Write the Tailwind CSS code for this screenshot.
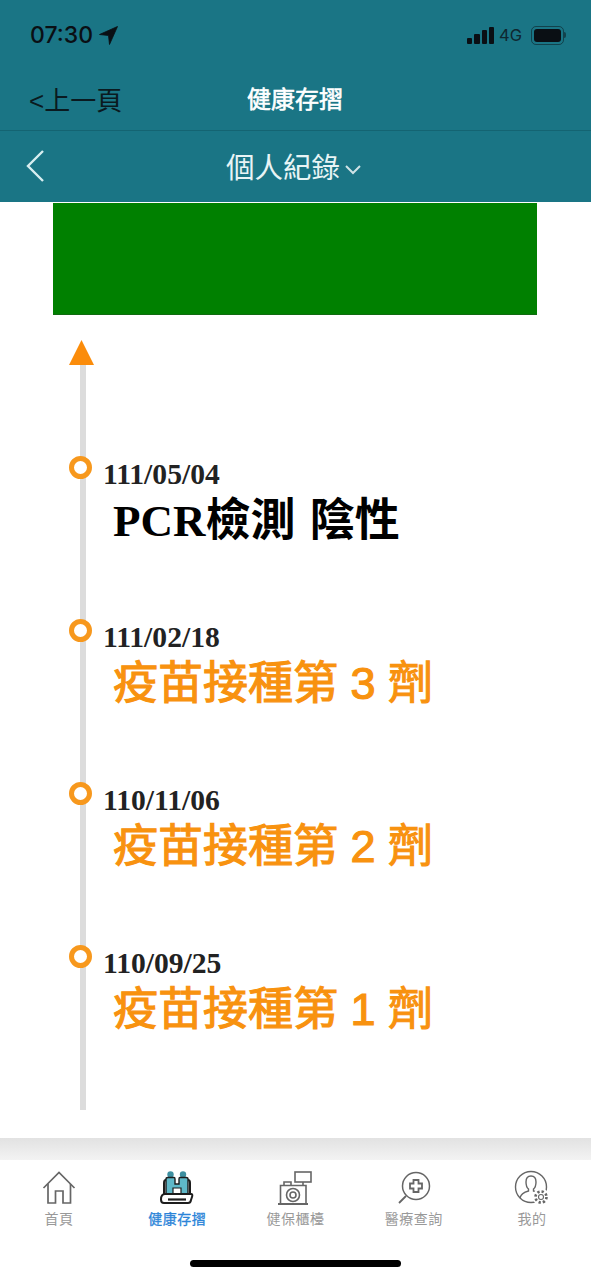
<!DOCTYPE html>
<html lang="zh-Hant">
<head>
    <meta charset="UTF-8">
    <meta name="viewport" content="width=device-width, initial-scale=1.0">
    <title>健康存摺</title>
    <script src="https://cdn.jsdelivr.net/npm/@tailwindcss/browser@4"></script>
</head>
<body class="bg-white font-['Liberation_Sans','Noto_Sans_CJK_TC',sans-serif]">
<div class="w-[591px] h-[1279px] flex flex-col overflow-hidden">
    <!-- 頂部 -->
    <header class="bg-[#1a7585] h-[202px] flex flex-col shrink-0">
        <div class="h-[60px] pt-[20px] pl-[30px] pr-[25px] flex items-start justify-between text-[#0a0f14]">
            <div class="flex items-center gap-[6px] text-[23px] leading-[30px] font-['Inter',sans-serif] font-medium">
                07:30
                <svg width="19" height="19" viewBox="0 0 19 19"><path d="M18.5 0.500 L0.500 8.500 L9.500 9.500 L10.500 18.500 Z" fill="#0a0f14" stroke="#0a0f14" stroke-width="0.800"/></svg>
            </div>
            <div class="flex items-center gap-[6px] h-[30px]">
                <div class="flex items-end gap-[2px] h-[17px] -ml-[1px]">
                    <span class="w-[5.25px] h-[6px] bg-[#0a0f14] rounded-[1px]"></span>
                    <span class="w-[5.25px] h-[10px] bg-[#0a0f14] rounded-[1px]"></span>
                    <span class="w-[5.25px] h-[14px] bg-[#0a0f14] rounded-[1px]"></span>
                    <span class="w-[5.25px] h-[17px] bg-[#0a0f14] rounded-[1px]"></span>
                </div>
                <span class="text-[16.5px] leading-none font-['Inter',sans-serif] text-[#0f2730] mr-[3px] -ml-[1px]">4G</span>
                <div class="w-[33px] h-[19px] border border-[#0a0f14]/50 rounded-[5px] p-[2px]">
                    <div class="w-full h-full bg-[#0a0f14] rounded-[3px]"></div>
                </div>
                <span class="w-[2px] h-[6px] bg-[#0a0f14]/50 -ml-[6px] rounded-r-[2px]"></span>
            </div>
        </div>
        <div class="h-[71px] relative flex items-center justify-center border-b border-[#146472]">
            <span class="absolute left-[29px] top-[26px] text-[26px] leading-[30px] text-[#0a1a20]">&lt;上一頁</span>
            <span class="text-[24px] text-white leading-[30px] mt-[10px] -ml-[1px] [-webkit-text-stroke:0.6px_#ffffff]">健康存摺</span>
        </div>
        <div class="h-[70px] relative flex items-center justify-center">
            <svg class="absolute left-[23px] top-[18px]" width="24" height="34" viewBox="0 0 24 34" fill="none"><path d="M20 2 L5 17 L20 32" stroke="#d8eef0" stroke-width="2.400"/></svg>
            <span class="text-[28.5px] text-[#e8f4f5] leading-[36px] mt-[4px] -ml-[3px]">個人紀錄</span>
            <svg class="ml-[4px] mt-[8px]" width="18" height="12" viewBox="0 0 18 12" fill="none"><path d="M2 2 L9 9 L16 2" stroke="#cfe3e6" stroke-width="2"/></svg>
        </div>
    </header>

    <!-- 內容 -->
    <main class="h-[936px] shrink-0 pl-[53px] pr-[54px]">
        <div class="h-[112px] mt-[1px] bg-[#008000] border-b border-[#116a11]"></div>
        <div class="relative h-[796px] mt-[25px]">
            <div class="absolute left-[27px] top-[24px] w-[6px] h-[746px] bg-[#dcdcdc]"></div>
            <svg class="absolute left-[16px] top-0" width="25" height="25" viewBox="0 0 25 25"><path d="M12.500 0 L25 25 L0 25 Z" fill="#fb8c0a"/></svg>
            <div class="pt-[111px] pl-[50px] flex flex-col">
                <div class="relative h-[163px]">
                    <span class="absolute left-[-34px] top-[5px] w-[23px] h-[23px] rounded-full bg-white border-[5px] border-[#f7981d]"></span>
                    <p class="mt-[7px] font-['Liberation_Serif','Noto_Sans_CJK_TC',serif] font-bold text-[29.6px] leading-[32px] text-[#222]">111/05/04</p>
                    <p class="ml-[10px] mt-[1px] [word-spacing:3px] font-['Liberation_Serif','Noto_Sans_CJK_TC',serif] font-bold text-[45px] leading-[60px] text-black">PCR檢測 陰性</p>
                </div>
                <div class="relative h-[163px]">
                    <span class="absolute left-[-34px] top-[5px] w-[23px] h-[23px] rounded-full bg-white border-[5px] border-[#f7981d]"></span>
                    <p class="mt-[7px] font-['Liberation_Serif','Noto_Sans_CJK_TC',serif] font-bold text-[29.6px] leading-[32px] text-[#222]">111/02/18</p>
                    <p class="ml-[10px] mt-[1px] text-[45px] leading-[60px] text-[#f8920f] [-webkit-text-stroke:1.2px_#f8920f]">疫苗接種第 3 劑</p>
                </div>
                <div class="relative h-[163px]">
                    <span class="absolute left-[-34px] top-[5px] w-[23px] h-[23px] rounded-full bg-white border-[5px] border-[#f7981d]"></span>
                    <p class="mt-[7px] font-['Liberation_Serif','Noto_Sans_CJK_TC',serif] font-bold text-[29.6px] leading-[32px] text-[#222]">110/11/06</p>
                    <p class="ml-[10px] mt-[1px] text-[45px] leading-[60px] text-[#f8920f] [-webkit-text-stroke:1.2px_#f8920f]">疫苗接種第 2 劑</p>
                </div>
                <div class="relative h-[163px]">
                    <span class="absolute left-[-34px] top-[5px] w-[23px] h-[23px] rounded-full bg-white border-[5px] border-[#f7981d]"></span>
                    <p class="mt-[7px] font-['Liberation_Serif','Noto_Sans_CJK_TC',serif] font-bold text-[29.6px] leading-[32px] text-[#222]">110/09/25</p>
                    <p class="ml-[10px] mt-[1px] text-[45px] leading-[60px] text-[#f8920f] [-webkit-text-stroke:1.2px_#f8920f]">疫苗接種第 1 劑</p>
                </div>
            </div>
        </div>
    </main>

    <!-- 陰影 -->
    <div class="h-[22px] shrink-0 bg-gradient-to-b from-[#e2e2e2] to-[#f3f3f3]"></div>

    <!-- 底部選單 -->
    <nav class="relative flex-1 bg-white grid grid-cols-5 pt-[10px] items-start">
        <div class="flex flex-col items-center text-[#999]">
            <svg width="36" height="36" viewBox="0 0 36 36" fill="none" stroke="#666" stroke-width="1.700"><path d="M2.500 18 L18 2.500 L33.500 18"/><path d="M7 14 V33 H14.500 V21 H22 V33 H29.500 V14"/></svg>
            <span class="mt-[3px] text-[14px] leading-[20px] tracking-[0.5px]">首頁</span>
        </div>
        <div class="flex flex-col items-center text-[#2a84d8]">
            <svg width="36" height="36" viewBox="0 0 36 36" fill="none">
                <circle cx="11.500" cy="4.500" r="3.200" fill="#3d8fa0"/><circle cx="24" cy="4.500" r="3.200" fill="#3d8fa0"/>
                <path d="M7 9 Q7 7.500 9 7.500 H15 Q16 7.500 16 9 V14 H20 V9 Q20 7.500 21 7.500 H27 Q29 7.500 29 9 V24 H7 Z" fill="#5fb8c8" stroke="#1d1d1d" stroke-width="1.400"/>
                <path d="M14 24 V18 H22 V24" fill="#fff" stroke="#1d1d1d" stroke-width="1.200"/>
                <path d="M5 24 V13 Q5 10 7 10 M31 24 V13 Q31 10 29 10" stroke="#1d1d1d" stroke-width="2"/>
                <path d="M6 24 H32 Q34 24 33 27 L32 30 Q31.500 33 29 33 H5 Q2 33 2 29.500 Q2 24 6 24 Z" fill="#fff" stroke="#1d1d1d" stroke-width="2"/>
                <path d="M9 29.500 H27" stroke="#1d1d1d" stroke-width="2.200"/>
            </svg>
            <span class="mt-[3px] text-[14px] leading-[20px] tracking-[0.5px] [-webkit-text-stroke:0.3px_#2a84d8]">健康存摺</span>
        </div>
        <div class="flex flex-col items-center text-[#999]">
            <svg width="36" height="36" viewBox="0 0 36 36" fill="none" stroke="#666" stroke-width="1.600">
                <rect x="18" y="2" width="16" height="10"/><path d="M26 12 V15.500"/>
                <path d="M7 15.500 V12 H14 V15.500"/><path d="M3.500 34 V15.500 H29 V34"/><path d="M1 34 H31" stroke-width="2"/>
                <circle cx="16" cy="25" r="6.500"/><circle cx="16" cy="25" r="3"/>
            </svg>
            <span class="mt-[3px] text-[14px] leading-[20px] tracking-[0.5px]">健保櫃檯</span>
        </div>
        <div class="flex flex-col items-center text-[#999]">
            <svg width="36" height="36" viewBox="0 0 36 36" fill="none" stroke="#666" stroke-width="1.500">
                <circle cx="20" cy="16" r="13.500"/><path d="M10 26 L3 33" stroke-width="1.800"/>
                <path d="M17.500 10 H22.500 V13.500 H26 V18.500 H22.500 V22 H17.500 V18.500 H14 V13.500 H17.500 Z" stroke-width="1.800"/>
            </svg>
            <span class="mt-[3px] text-[14px] leading-[20px] tracking-[0.5px]">醫療查詢</span>
        </div>
        <div class="flex flex-col items-center text-[#999]">
            <svg width="36" height="36" viewBox="0 0 36 36" fill="none" stroke="#666" stroke-width="1.400">
                <circle cx="17" cy="17" r="15.500"/>
                <path d="M17 6 Q12 6 12 12 Q12 17 14.500 19 V21 Q7 23 6 28"/><path d="M17 6 Q22 6 22 12 Q22 17 19.500 19 V21 L22 22"/>
                <circle cx="27" cy="27" r="8.500" fill="#fff" stroke="none"/>
                <circle cx="27" cy="27" r="5.500" stroke-width="2.600" stroke-dasharray="2.300 2"/>
                <circle cx="27" cy="27" r="2.500" stroke-width="1.100"/>
            </svg>
            <span class="mt-[3px] text-[14px] leading-[20px] tracking-[0.5px]">我的</span>
        </div>
        <div class="absolute left-[190px] top-[100px] w-[211px] h-[7px] bg-black rounded-full"></div>
    </nav>
</div>
</body>
</html>
